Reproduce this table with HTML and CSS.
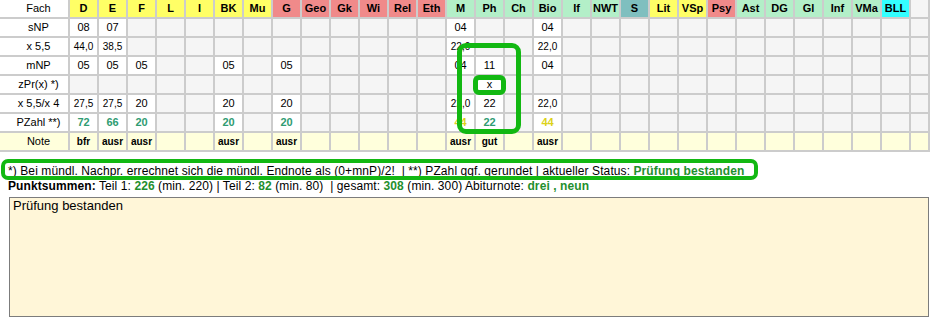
FILE: index.html
```html
<!DOCTYPE html>
<html lang="de">
<head>
<meta charset="utf-8">
<title>Abiturrechner</title>
<link rel="stylesheet" href="styles.css">
</head>
<body>
<div class="page">
<table class="grid">
<thead>
<tr>
<th class="lab">Fach</th>
<th class="y">D</th><th class="y">E</th><th class="y">F</th><th class="y">L</th><th class="y">I</th><th class="y">BK</th><th class="y">Mu</th>
<th class="r">G</th><th class="r">Geo</th><th class="r">Gk</th><th class="r">Wi</th><th class="r">Rel</th><th class="r">Eth</th>
<th class="g">M</th><th class="g">Ph</th><th class="g">Ch</th><th class="g">Bio</th><th class="g">If</th><th class="g">NWT</th>
<th class="t">S</th><th class="y">Lit</th><th class="y">VSp</th><th class="r">Psy</th>
<th class="g">Ast</th><th class="g">DG</th><th class="g">Gl</th><th class="g">Inf</th><th class="g">VMa</th><th class="c">BLL</th>
<th class="end"></th>
</tr>
</thead>
<tbody>
<tr>
<td class="lab">sNP</td>
<td class="v">08</td><td class="v">07</td><td></td><td></td><td></td><td></td><td></td>
<td></td><td></td><td></td><td></td><td></td><td></td>
<td class="v">04</td><td></td><td></td><td class="v">04</td><td></td><td></td>
<td></td><td></td><td></td><td></td>
<td></td><td></td><td></td><td></td><td></td><td></td>
<td class="end"></td>
</tr>
<tr>
<td class="lab">x 5,5</td>
<td class="v s">44,0</td><td class="v s">38,5</td><td></td><td></td><td></td><td></td><td></td>
<td></td><td></td><td></td><td></td><td></td><td></td>
<td class="v s">22,0</td><td></td><td></td><td class="v s">22,0</td><td></td><td></td>
<td></td><td></td><td></td><td></td>
<td></td><td></td><td></td><td></td><td></td><td></td>
<td class="end"></td>
</tr>
<tr>
<td class="lab">mNP</td>
<td class="v">05</td><td class="v">05</td><td class="v">05</td><td></td><td></td><td class="v">05</td><td></td>
<td class="v">05</td><td></td><td></td><td></td><td></td><td></td>
<td class="v">04</td><td class="v">11</td><td></td><td class="v">04</td><td></td><td></td>
<td></td><td></td><td></td><td></td>
<td></td><td></td><td></td><td></td><td></td><td></td>
<td class="end"></td>
</tr>
<tr>
<td class="lab">zPr(x) *)</td>
<td></td><td></td><td></td><td></td><td></td><td></td><td></td>
<td></td><td></td><td></td><td></td><td></td><td></td>
<td></td><td class="v">x</td><td></td><td></td><td></td><td></td>
<td></td><td></td><td></td><td></td>
<td></td><td></td><td></td><td></td><td></td><td></td>
<td class="end"></td>
</tr>
<tr>
<td class="lab">x 5,5/x 4</td>
<td class="v s">27,5</td><td class="v s">27,5</td><td class="v">20</td><td></td><td></td><td class="v">20</td><td></td>
<td class="v">20</td><td></td><td></td><td></td><td></td><td></td>
<td class="v s">22,0</td><td class="v">22</td><td></td><td class="v s">22,0</td><td></td><td></td>
<td></td><td></td><td></td><td></td>
<td></td><td></td><td></td><td></td><td></td><td></td>
<td class="end"></td>
</tr>
<tr>
<td class="lab">PZahl **)</td>
<td class="v ok">72</td><td class="v ok">66</td><td class="v ok">20</td><td></td><td></td><td class="v ok">20</td><td></td>
<td class="v ok">20</td><td></td><td></td><td></td><td></td><td></td>
<td class="v warn">44</td><td class="v ok">22</td><td></td><td class="v warn">44</td><td></td><td></td>
<td></td><td></td><td></td><td></td>
<td></td><td></td><td></td><td></td><td></td><td></td>
<td class="end"></td>
</tr>
<tr class="note">
<td class="lab">Note</td>
<td class="n">bfr</td><td class="n">ausr</td><td class="n">ausr</td><td></td><td></td><td class="n">ausr</td><td></td>
<td class="n">ausr</td><td></td><td></td><td></td><td></td><td></td>
<td class="n">ausr</td><td class="n">gut</td><td></td><td class="n">ausr</td><td></td><td></td>
<td></td><td></td><td></td><td></td>
<td></td><td></td><td></td><td></td><td></td><td></td>
<td class="end"></td>
</tr>
</tbody>
</table>

<div class="info">
<p class="line">*) Bei mündl. Nachpr. errechnet sich die mündl. Endnote als (0+mnP)/2!&nbsp; | **) PZahl ggf. gerundet | aktueller Status: <b class="hl">Prüfung bestanden</b></p>
<p class="line"><b>Punktsummen:</b> Teil 1: <b class="hl">226</b> (min. 220) | Teil 2: <b class="hl">82</b> (min. 80)&nbsp; | gesamt: <b class="hl">308</b> (min. 300) Abiturnote: <b class="hl">drei , neun</b></p>
</div>
<textarea class="memo">Prüfung bestanden</textarea>

<div class="mark mark-note"></div>
<div class="mark mark-col"></div>
<div class="mark mark-x"></div>
</div>
</body>
</html>
```
FILE: styles.css
```css
html, body {
  margin: 0;
  padding: 0;
  background: #ffffff;
}

.page {
  position: relative;
  width: 930px;
  height: 318px;
  overflow: hidden;
  font-family: "Liberation Sans", Arial, sans-serif;
  color: #000;
}

.grid {
  border-collapse: separate;
  border-spacing: 0;
  table-layout: fixed;
  width: 930px;
  font-size: 11px;
}

.grid th,
.grid td {
  box-sizing: content-box;
  width: 27px;
  height: 17px;
  padding: 0;
  line-height: 15px;
  text-align: center;
  vertical-align: middle;
  background: #f5f5f5;
  border-right: 2px solid #cccccc;
  border-bottom: 2px solid #cccccc;
  white-space: nowrap;
  overflow: visible;
}

.grid th {
  font-weight: bold;
}

.grid .lab {
  width: 59px;
  padding-left: 9px;
  background: #ffffff;
  font-weight: normal;
}

.grid .end {
  width: 17px;
}

.grid th.y { background: #ffff66; }
.grid th.r { background: #f08a8a; }
.grid th.g { background: #b3efc8; }
.grid th.t { background: #7fbfbf; }
.grid th.c { background: #33ffff; }

.grid td.v { background: #ffffff; }
.grid td.s { font-size: 10px; }
.grid td.ok { color: #2f9c72; font-weight: bold; }
.grid td.warn { color: #dcd21a; font-weight: bold; }

.grid tr.note td { background: #ffffdc; }
.grid td.n { font-weight: bold; font-size: 10px; }

.info {
  padding: 12px 8px 0 8px;
  font-size: 12px;
  letter-spacing: 0.09px;
}

.line {
  margin: 0;
  line-height: 14.5px;
  white-space: nowrap;
}

.hl {
  color: #1f8f2e;
}

.memo {
  display: block;
  box-sizing: border-box;
  margin: 4px 0 0 9px;
  width: 920px;
  height: 120px;
  padding: 0 3px;
  border: 1px solid #7c7c7c;
  background: #fff6d8;
  font-family: "Liberation Sans", Arial, sans-serif;
  font-size: 13px;
  line-height: 15px;
  color: #000;
  resize: none;
}

.mark {
  position: absolute;
  box-sizing: border-box;
  border: 4px solid #12b812;
  pointer-events: none;
}

.mark-note {
  left: 1px;
  top: 159px;
  width: 757px;
  height: 21px;
  border-radius: 7px;
}

.mark-col {
  left: 457px;
  top: 43px;
  width: 64px;
  height: 91px;
  border-width: 5px;
  border-radius: 9px;
}

.mark-x {
  left: 473px;
  top: 75px;
  width: 33px;
  height: 20px;
  border-width: 5px;
  border-radius: 6px;
}
```
